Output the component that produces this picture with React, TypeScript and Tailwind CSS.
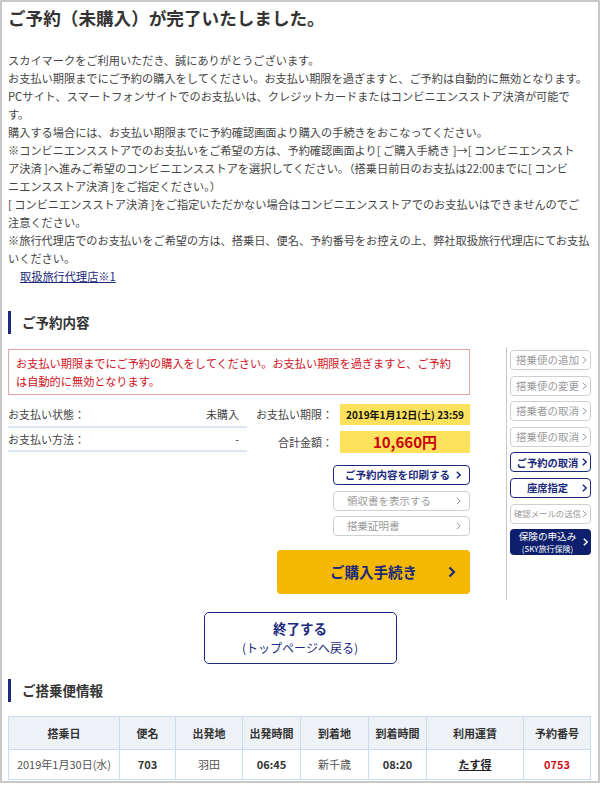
import React from "react";

const introLines = [
  "スカイマークをご利用いただき、誠にありがとうございます。",
  "お支払い期限までにご予約の購入をしてください。お支払い期限を過ぎますと、ご予約は自動的に無効となります。",
  "PCサイト、スマートフォンサイトでのお支払いは、クレジットカードまたはコンビニエンスストア決済が可能で",
  "す。",
  "購入する場合には、お支払い期限までに予約確認画面より購入の手続きをおこなってください。",
  "※コンビニエンスストアでのお支払いをご希望の方は、予約確認画面より[ ご購入手続き ]→[ コンビニエンススト",
  "ア決済 ]へ進みご希望のコンビニエンスストアを選択してください。（搭乗日前日のお支払は22:00までに[ コンビ",
  "ニエンスストア決済 ]をご指定ください。）",
  "[ コンビニエンスストア決済 ]をご指定いただかない場合はコンビニエンスストアでのお支払いはできませんのでご",
  "注意ください。",
  "※旅行代理店でのお支払いをご希望の方は、搭乗日、便名、予約番号をお控えの上、弊社取扱旅行代理店にてお支払",
  "いください。",
];

const Chevron = ({ bold = false }: { bold?: boolean }) => (
  <svg width="5" height="8" viewBox="0 0 5 8" className="shrink-0">
    <polyline
      points="0.8,0.8 4.2,4 0.8,7.2"
      fill="none"
      stroke="currentColor"
      strokeWidth={bold ? 1.5 : 1}
    />
  </svg>
);

// Right sidebar buttons
const sideButtons: { label: string; active?: boolean; small?: boolean }[] = [
  { label: "搭乗便の追加" },
  { label: "搭乗便の変更" },
  { label: "搭乗者の取消" },
  { label: "搭乗便の取消" },
  { label: "ご予約の取消", active: true },
  { label: "座席指定", active: true },
  { label: "確認メールの送信", small: true },
];

const SectionTitle = ({ children }: { children: React.ReactNode }) => (
  <div className="flex items-center h-[23px] border-l-[3px] border-[#1b2a7c] pl-[11px]">
    <h2 className="text-[13.5px] font-bold text-[#333]">{children}</h2>
  </div>
);

const columns = [
  { head: "搭乗日", w: "w-[111px]" },
  { head: "便名", w: "w-[56px]" },
  { head: "出発地", w: "w-[67px]" },
  { head: "出発時間", w: "w-[58px]" },
  { head: "到着地", w: "w-[68px]" },
  { head: "到着時間", w: "w-[58px]" },
  { head: "利用運賃", w: "w-[97px]" },
  { head: "予約番号", w: "w-[67px]" },
];

export default function App() {
  return (
    <div className="w-[600px] h-[785px] bg-white font-['Noto_Sans_CJK_JP',sans-serif] text-[#444]">
      <div className="h-[783px] border-2 border-[#c8c8c8] pl-[6px] pr-[6px] overflow-hidden">
        {/* Title */}
        <h1 className="mt-[4px] text-[17.6px] leading-[24px] font-bold text-[#333]">
          ご予約（未購入）が完了いたしました。
        </h1>

        {/* Intro text */}
        <div className="mt-[21px] text-[11.2px] leading-[18px]">
          {introLines.map((line, i) => (
            <div key={i} className="whitespace-nowrap">
              {line}
            </div>
          ))}
          <div className="pl-[12px]">
            <a href="#" className="text-[#1b2a7c] underline">
              取扱旅行代理店※1
            </a>
          </div>
        </div>

        {/* ご予約内容 */}
        <div className="mt-[26px]">
          <SectionTitle>ご予約内容</SectionTitle>
        </div>

        <div className="mt-[13px] flex">
          {/* Main column */}
          <div className="w-[462px] pt-[2px] pb-[6px]">
            <div className="h-[46px] border border-[#e9a3a3] px-[7px] py-[4px] text-[11.2px] leading-[18px] text-[#d0101b]">
              お支払い期限までにご予約の購入をしてください。お支払い期限を過ぎますと、ご予約
              <br />
              は自動的に無効となります。
            </div>

            <div className="mt-[9px] flex">
              {/* Status */}
              <div className="w-[239px] text-[11px]">
                <div className="flex justify-between h-[24px] pt-[2px] pr-[8px] border-b-2 border-[#dde7f3]">
                  <span>お支払い状態：</span>
                  <span>未購入</span>
                </div>
                <div className="flex justify-between h-[24px] pt-[3px] pr-[8px] border-b-2 border-[#dde7f3]">
                  <span>お支払い方法：</span>
                  <span>-</span>
                </div>
              </div>

              {/* Payment */}
              <div className="flex-1 flex flex-col gap-[6px] text-[11px]">
                <div className="flex items-center justify-end gap-[7px]">
                  <span>お支払い期限：</span>
                  <div className="w-[130px] h-[21px] bg-[#fde15c] flex items-center justify-center text-[10px] font-bold text-[#111]">
                    2019年1月12日(土) 23:59
                  </div>
                </div>
                <div className="flex items-center justify-end gap-[7px]">
                  <span>合計金額：</span>
                  <div className="w-[130px] h-[22px] bg-[#fde15c] flex items-center justify-center text-[15px] font-bold text-[#c8000f]">
                    10,660円
                  </div>
                </div>
              </div>
            </div>

            {/* Action buttons */}
            <div className="mt-[12px] flex flex-col items-end gap-[5.5px] text-[10.5px]">
              <button className="w-[137px] h-[20px] rounded-[4px] border border-[#1b2a7c] flex items-center pl-[11px] pr-[8px] font-bold text-[#1b2a7c]">
                <span className="flex-1 text-left whitespace-nowrap">ご予約内容を印刷する</span>
                <Chevron bold />
              </button>
              <button className="w-[137px] h-[20px] rounded-[4px] border border-[#cfcfcf] flex items-center pl-[13px] pr-[8px] text-[#9a9a9a]">
                <span className="flex-1 text-left">領収書を表示する</span>
                <Chevron />
              </button>
              <button className="w-[137px] h-[20px] rounded-[4px] border border-[#cfcfcf] flex items-center pl-[13px] pr-[8px] text-[#9a9a9a]">
                <span className="flex-1 text-left">搭乗証明書</span>
                <Chevron />
              </button>
            </div>

            <div className="mt-[14px] flex justify-end">
              <button className="w-[193px] h-[44px] rounded-[4px] bg-[#f4b800] grid grid-cols-[14px_1fr_14px] items-center px-[14px] text-[#1b2a7c]">
                <span />
                <span className="text-[14.5px] font-bold text-center">ご購入手続き</span>
                <span className="flex justify-end">
                  <svg width="8" height="12" viewBox="0 0 8 12">
                    <polyline points="1.5,1.5 6,6 1.5,10.5" fill="none" stroke="currentColor" strokeWidth="2.2" />
                  </svg>
                </span>
              </button>
            </div>
          </div>

          {/* Sidebar */}
          <div className="ml-[36px] border-l border-[#c8c8c8] pl-[3px] pt-[3px] flex flex-col gap-[5.6px]">
            {sideButtons.map((b) => (
              <button
                key={b.label}
                className={
                  b.active
                    ? "w-[81px] h-[20px] rounded-[4px] border border-[#1b2a7c] flex items-center pl-[2px] pr-[3px] text-[10.3px] font-bold text-[#1b2a7c]"
                    : "w-[81px] h-[20px] rounded-[4px] border border-[#cfcfcf] flex items-center pl-[2px] pr-[3px] text-[#9a9a9a] " +
                      (b.small ? "text-[8.4px]" : "text-[10.5px]")
                }
              >
                <span className="flex-1 text-center whitespace-nowrap">{b.label}</span>
                <Chevron bold={b.active} />
              </button>
            ))}
            <button className="w-[81px] h-[26px] rounded-[4px] bg-[#0e1f6d] flex items-center pl-[2px] pr-[3px] text-white">
              <span className="flex-1 flex flex-col items-center">
                <span className="text-[9.6px] leading-[14px]">保険の申込み</span>
                <span className="text-[8px] leading-[12px]">(SKY旅行保険)</span>
              </span>
              <Chevron bold />
            </button>
          </div>
        </div>

        {/* End button */}
        <div className="mt-[12px] flex justify-center">
          <button className="w-[193px] h-[52px] rounded-[5px] border border-[#1b2a7c] flex flex-col items-center justify-center text-[#1b2a7c]">
            <span className="text-[13.5px] font-bold leading-[19px]">終了する</span>
            <span className="text-[12px] leading-[19px]">(トップページへ戻る)</span>
          </button>
        </div>

        {/* ご搭乗便情報 */}
        <div className="mt-[15px]">
          <SectionTitle>ご搭乗便情報</SectionTitle>
        </div>

        <table className="mt-[14px] w-[582px] border-collapse text-[11px] table-fixed">
          <thead>
            <tr className="bg-[#eef2f6] h-[33px]">
              {columns.map((c) => (
                <th key={c.head} className={`${c.w} border border-[#c9dcef] font-bold text-[#333]`}>
                  {c.head}
                </th>
              ))}
            </tr>
          </thead>
          <tbody>
            <tr className="h-[30px] text-center">
              <td className="border border-[#c9dcef] text-[#555]">2019年1月30日(水)</td>
              <td className="border border-[#c9dcef] font-bold text-[#333]">703</td>
              <td className="border border-[#c9dcef] text-[#555]">羽田</td>
              <td className="border border-[#c9dcef] font-bold text-[#333]">06:45</td>
              <td className="border border-[#c9dcef] text-[#555]">新千歳</td>
              <td className="border border-[#c9dcef] font-bold text-[#333]">08:20</td>
              <td className="border border-[#c9dcef] font-bold">
                <a href="#" className="underline text-[#222]">たす得</a>
              </td>
              <td className="border border-[#c9dcef] font-bold text-[#d0101b]">0753</td>
            </tr>
          </tbody>
        </table>
      </div>
    </div>
  );
}
